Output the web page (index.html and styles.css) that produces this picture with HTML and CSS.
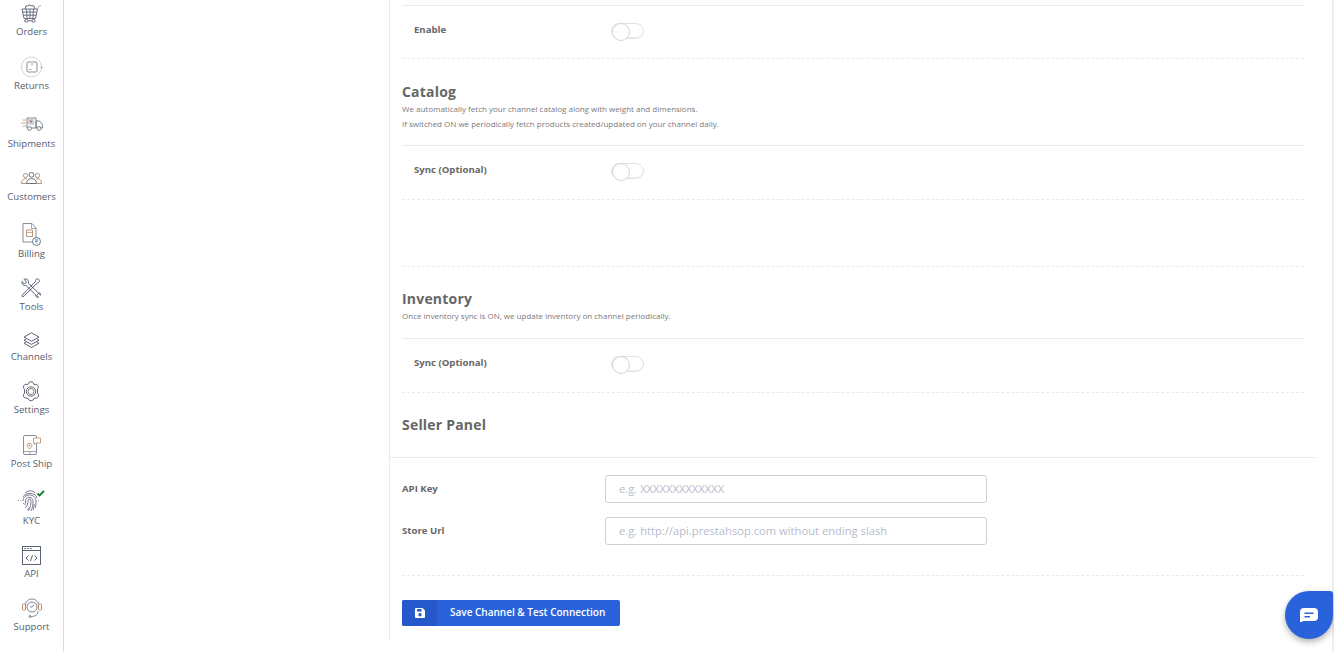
FILE: index.html
```html
<!DOCTYPE html>
<html lang="en">
<head>
<meta charset="utf-8">
<title>Channel settings</title>
<link rel="stylesheet" href="styles.css">
</head>
<body>
<div class="app">
  <nav class="sidebar">
    <a class="nav-item nav-orders">
      <svg class="ico" width="21" height="19" viewBox="0 0 21 19"><g fill="none" stroke="#4a5268" stroke-width=".8"><path d="M1 5h15.500l-2 9.500H3z"/><path d="M1.800 8h14M2.400 11.200h12.800M5.500 5l.6 9.500M9 5v9.500M12.500 5l-.6 9.500"/><circle cx="5.500" cy="16.800" r="1.500"/><circle cx="12.500" cy="16.800" r="1.500"/><path d="M3 16.800h1M7 16.800h4"/><path d="M4 5l1-3h2l1-1.200 2 1 3 0 1 3"/></g><path d="M16.500 5l1-2.500 2.500-1" stroke="#b98d6a" stroke-width=".8" fill="none"/></svg>
      <span class="nav-label">Orders</span>
    </a>
    <a class="nav-item nav-returns">
      <svg class="ico" width="22" height="22" viewBox="0 0 22 22"><circle cx="10.500" cy="11" r="10" fill="none" stroke="#d9d3cc"/><rect x="6" y="6" width="10" height="10" rx="1" fill="none" stroke="#7b8296" stroke-width=".9"/><path d="M9.500 6h3v3.500h-3z" fill="#d9dbe2"/><path d="M8.500 13.500h2" stroke="#7b8296" stroke-width=".8"/><path d="M20 11l1.500 1" stroke="#6d758a"/></svg>
      <span class="nav-label">Returns</span>
    </a>
    <a class="nav-item nav-shipments">
      <svg class="ico" width="22" height="14" viewBox="0 0 22 14"><g fill="none" stroke="#5a6278" stroke-width=".8"><path d="M6 1h9v10H6zM15 4h3.500l3 3.500V11H15z"/></g><rect x="7" y="1.500" width="6" height="6" fill="#c9ccd4"/><path d="M9 4.500h2M10 3v3" stroke="#b5664a" stroke-width=".7"/><g fill="#fff" stroke="#5a6278" stroke-width=".8"><circle cx="8.500" cy="11.500" r="1.900"/><circle cx="18" cy="11.500" r="1.900"/></g><path d="M1.500 3H5M0 6h5M1.500 9H5" stroke="#c9965f" stroke-width=".8" fill="none"/></svg>
      <span class="nav-label">Shipments</span>
    </a>
    <a class="nav-item nav-customers">
      <svg class="ico" width="21" height="12" viewBox="0 0 21 12"><g fill="none" stroke="#4a5268" stroke-width=".8"><circle cx="10.500" cy="2.800" r="2.400"/><path d="M5.500 11.500c0-6.500 10-6.500 10 0z"/></g><g fill="none" stroke="#a2785c" stroke-width=".8"><circle cx="4.500" cy="3.500" r="2.100"/><circle cx="16.500" cy="3.500" r="2.100"/><path d="M5.500 11.500H.5c0-4 3-5.500 5.500-4.500M15.500 11.500h5c0-4-3-5.500-5.500-4.500"/></g></svg>
      <span class="nav-label">Customers</span>
    </a>
    <a class="nav-item nav-billing">
      <svg class="ico" width="19" height="23" viewBox="0 0 19 23"><path d="M1 .5h9l4 4.500v14H1z" fill="none" stroke="#7b8296" stroke-width=".9"/><path d="M9.500.5v5H14" fill="none" stroke="#7b8296" stroke-width=".7"/><path d="M4.500 7h6v6.500h-6z" fill="none" stroke="#b98d6a" stroke-width=".9"/><path d="M4.500 9.500h6" stroke="#b98d6a" stroke-width=".7"/><circle cx="14.500" cy="18.500" r="4" fill="#fff" stroke="#5a6278" stroke-width=".9"/><path d="M13 16.800h3M13 18.300h3M13.800 16.800c2 0 1.700 1.800-.3 1.800l2 2.200" stroke="#3b6fc4" stroke-width=".6" fill="none"/></svg>
      <span class="nav-label">Billing</span>
    </a>
    <a class="nav-item nav-tools">
      <svg class="ico" width="20" height="20" viewBox="0 0 20 20"><g fill="none" stroke="#4a5268" stroke-width=".9"><path d="M1 3.500l2.500 2.500 2-2L3 1.300C5 .3 7.500 1.500 7.500 4l-.3 1 10 9.800c1.200-.4 2.500.4 2.300 2.400l-2-1.700-1.800 1.800 1.900 2c-2 .3-3-.8-2.800-2.300L4.800 7.400C2.500 8 .5 6 1 3.500z"/><path d="M15.500 1c1-1 3.500.8 2.800 2.800-.3.8-1.300 1-2 1.200L3.500 17.500 1.800 19 .8 18l1.400-2L14.500 3.500c0-.8.300-1.800 1-2.500z"/></g></svg>
      <span class="nav-label">Tools</span>
    </a>
    <a class="nav-item nav-channels">
      <svg class="ico" width="17" height="16" viewBox="0 0 17 16"><g fill="none" stroke="#4a5268" stroke-width=".9"><path d="M8.500 .8l7.500 4.200-7.500 4.200L1 5z"/><path d="M3 7L1 8.200l7.500 4.200L16 8.200 14 7"/><path d="M3 10.300l-2 1 7.500 4.200 7.500-4.200-2-1"/></g></svg>
      <span class="nav-label">Channels</span>
    </a>
    <a class="nav-item nav-settings">
      <svg class="ico" width="20" height="21" viewBox="0 0 20 21"><g fill="none" stroke="#4a5268" stroke-width=".9"><path d="M8 1.500c1-1 3-1 4 0l1 2 2.200-.2c1.500.3 2.500 2 2 3.500L16.500 8.500v3.500l1 1.700c.5 1.500-.5 3.200-2 3.500l-2.200-.2-1.300 2c-1 1-3 1-4 0l-1.300-2-2.200.2c-1.500-.3-2.500-2-2-3.500l1-1.700V8.500l-1-1.700c-.5-1.500.5-3.200 2-3.500L6.700 3.500z"/><circle cx="10" cy="10.500" r="4.700"/></g><circle cx="10" cy="10.500" r="3" fill="none" stroke="#8a6f5d" stroke-width=".9"/></svg>
      <span class="nav-label">Settings</span>
    </a>
    <a class="nav-item nav-postship">
      <svg class="ico" width="18" height="20" viewBox="0 0 18 20"><rect x=".5" y=".5" width="13" height="19" rx="1.500" fill="none" stroke="#7b8296" stroke-width=".9"/><path d="M1 16.500h12M6 18h2" stroke="#7b8296" stroke-width=".7"/><path d="M6.500 14c-2-2-3-3.300-2.300-4.700.7-1.300 3.900-1.300 4.600 0 .7 1.400-.3 2.700-2.300 4.700z" fill="none" stroke="#b98d6a" stroke-width=".9"/><circle cx="6.500" cy="10.500" r=".9" fill="#b98d6a"/><path d="M10.500 3h7v5h-4.500l-1.500 1.500V8h-1z" fill="#fff" stroke="#b98d6a" stroke-width=".8"/></svg>
      <span class="nav-label">Post Ship</span>
    </a>
    <a class="nav-item nav-kyc">
      <svg class="ico" width="27" height="22" viewBox="0 0 27 22"><g fill="none" stroke="#4a5268" stroke-width=".75"><path d="M7 3c3-3 8-3 10 0"/><path d="M5 7c2-5 13-5 14 1"/><path d="M5 11c0-8 13-8 13 0 0 3 0 5-1 7"/><path d="M7 15c1-2 0-4 1-6 1.500-3 7-2 7 2 0 4-.5 7-2 10"/><path d="M7 18c2-1.500 3-4 3-7 0-3 3-2.500 3 0s-.5 6-2.500 10"/><path d="M5 14c.5 0 .5 0 .5-1M9 20c1-.8 1.500-1.500 2-2.500M15 20c1-2.500 1-4 1.300-6"/></g><path d="M0 10.500h4M20 10.500h2" stroke="#7b8296" stroke-width=".8" stroke-dasharray="1 1"/><path d="M19.500 3.500l2 2 4.500-4.500" fill="none" stroke="#17803a" stroke-width="1.900"/></svg>
      <span class="nav-label">KYC</span>
    </a>
    <a class="nav-item nav-api">
      <svg class="ico" width="19" height="19" viewBox="0 0 19 19"><rect x=".5" y=".5" width="18" height="18" fill="none" stroke="#4a5268" stroke-width=".9"/><path d="M.5 4.500h18" stroke="#4a5268" stroke-width=".9"/><path d="M2 2.500h2M5 2.500h2M8 2.500h2" stroke="#7b8296"/><path d="M6.500 9.500L4 12l2.500 2.500M12.500 9.500L15 12l-2.500 2.500M10.500 9l-2 6" fill="none" stroke="#4a5268" stroke-width=".9"/></svg>
      <span class="nav-label">API</span>
    </a>
    <a class="nav-item nav-support">
      <svg class="ico" width="20" height="20" viewBox="0 0 20 20"><g fill="none" stroke="#6d758a" stroke-width=".9"><path d="M3.500 7C4 -1 16 -1 16.500 7"/><circle cx="10" cy="9" r="5"/><path d="M10 9l2-2M10 9H8"/><path d="M16 13c0 4.500-3.500 5.500-7 5.500"/><circle cx="8" cy="18.500" r="1"/></g><rect x=".5" y="6" width="3" height="6" rx="1" fill="none" stroke="#b98d6a"/><rect x="16.500" y="6" width="3" height="6" rx="1" fill="none" stroke="#b98d6a"/></svg>
      <span class="nav-label">Support</span>
    </a>
  </nav>

  <main class="panel">
    <section class="block block-first">
      <div class="row"><span class="row-label">Enable</span><span class="toggle"></span></div>
    </section>

    <section class="block">
      <h2 class="title title-catalog">Catalog</h2>
      <p class="desc">We automatically fetch your channel catalog along with weight and dimensions.</p>
      <p class="desc">If switched ON we periodically fetch products created/updated on your channel daily.</p>
      <div class="row row-ruled row-catalog"><span class="row-label">Sync (Optional)</span><span class="toggle"></span></div>
      <div class="spacer"></div>
    </section>

    <section class="block">
      <h2 class="title title-inventory">Inventory</h2>
      <p class="desc">Once inventory sync is ON, we update inventory on channel periodically.</p>
      <div class="row row-ruled row-inventory"><span class="row-label">Sync (Optional)</span><span class="toggle"></span></div>
    </section>

    <section class="block">
      <h2 class="title title-seller">Seller Panel</h2>
    </section>

    <form class="credentials">
      <label class="field"><span class="field-label">API Key</span><input class="field-input" type="text" placeholder="e.g. XXXXXXXXXXXXX"></label>
      <label class="field"><span class="field-label">Store Url</span><input class="field-input" type="text" placeholder="e.g. http://api.prestahsop.com without ending slash"></label>
      <div class="form-rule"></div>
      <button class="save" type="button">
        <span class="save-icon"><svg width="10" height="10" viewBox="0 0 10 10"><path d="M1 0h6.500L10 2.500V9a1 1 0 0 1-1 1H1a1 1 0 0 1-1-1V1a1 1 0 0 1 1-1zm1 1v2.500h4.500V1zM5 5a1.700 1.700 0 1 0 0 3.400A1.700 1.700 0 0 0 5 5z" fill="#fff" fill-rule="evenodd"/></svg></span>
        <span class="save-text">Save Channel &amp; Test Connection</span>
      </button>
    </form>
  </main>
  <div class="rail"></div>
</div>
<button class="chat" type="button" aria-label="Chat">
  <svg width="18" height="14" viewBox="0 0 18 14"><path d="M4 0h10a4 4 0 0 1 4 4v5a4 4 0 0 1-4 4H3a3 3 0 0 1-3 1V4a4 4 0 0 1 4-4zm.5 4.500v1.600h9V4.500zm0 3.400v1.600h5.500V7.900z" fill="#fff" fill-rule="evenodd"/></svg>
</button>
</body>
</html>
```
FILE: styles.css
```css
* { box-sizing: border-box; }
html, body { margin: 0; height: 100%; overflow: hidden; background: #fff; }
body { font-family: "Open Sans", sans-serif; color: #666; }

.app { display: flex; height: 652px; }

.sidebar {
  width: 64px;
  flex: none;
  border-right: 1px solid #dcdcdc;
  display: flex;
  flex-direction: column;
  align-items: center;
}
.nav-item { display: flex; flex-direction: column; align-items: center; justify-content: flex-end; }
.nav-label { font-size: 9.600px; line-height: 16px; color: #565d70; height: 14px; white-space: nowrap; }
.ico { display: block; flex: none; }

.nav-orders { height: 38px; }
.nav-returns { height: 54px; }
.nav-shipments { height: 58px; }
.nav-customers { height: 53px; }
.nav-billing { height: 57px; }
.nav-tools { height: 53px; }
.nav-channels { height: 50px; }
.nav-settings { height: 53px; }
.nav-postship { height: 54px; }
.nav-kyc { height: 57px; }
.nav-api { height: 53px; }
.nav-support { height: 53px; }

.nav-orders .ico { margin-bottom: 1px; }
.nav-returns .ico { margin-bottom: 0; }
.nav-shipments .ico { margin-bottom: 5px; }
.nav-customers .ico { margin-bottom: 5px; }
.nav-billing .ico { margin-bottom: 0; }
.nav-tools .ico { margin-bottom: 1px; }
.nav-channels .ico { margin-bottom: 1px; }
.nav-settings .ico { margin-bottom: 0; }
.nav-postship .ico { margin-bottom: 1px; }
.nav-kyc .ico { margin-bottom: 1px; }
.nav-api .ico { margin-bottom: 1px; }
.nav-support .ico { margin-bottom: 1px; }

.panel {
  margin-left: 325px;
  width: 927px;
  height: 640px;
  padding-top: 5px;
  border-left: 1px solid #ececec;
  flex: none;
}
.rail { margin-left: auto; width: 2px; background: #eeeeee; flex: none; }

.block { margin: 0 12px; }
.block-first { border-top: 1px solid #ececec; }

.row {
  height: 53px;
  display: flex;
  align-items: flex-start;
  padding: 16px 0 0 12px;
  border-bottom: 1px dashed #e9e9e9;
}
.row-ruled { border-top: 1px solid #ececec; height: 55px; }
.row-catalog { margin-top: 14px; }
.row-inventory { margin-top: 15px; }
.row-label { width: 197px; font-size: 9.600px; line-height: 16px; font-weight: 700; color: #666; }

.toggle {
  width: 33px;
  height: 16px;
  margin-top: 1px;
  border: 1px solid #e2e2e2;
  border-radius: 9px;
  position: relative;
  display: block;
  box-shadow: inset 0 -1px 1px #ececec;
}
.toggle::before {
  content: "";
  position: absolute;
  left: 0;
  top: -1px;
  width: 16px;
  height: 16px;
  border-radius: 50%;
  background: #fff;
  border: 1px solid #d4d4d4;
}

.title { margin: 0 0 -1px; font-size: 14px; line-height: 20px; font-weight: 700; color: #666; letter-spacing: .2px; }
.title-catalog { padding-top: 23px; }
.title-inventory { padding-top: 22px; border-top: 1px dashed #e9e9e9; }
.title-seller { margin: 0; padding-top: 22px; padding-bottom: 22px; }
.desc { margin: 0; font-size: 8px; line-height: 15px; color: #7a7a7a; }

.spacer { height: 66px; }

.credentials { border-top: 1px solid #ececec; padding: 17px 12px 0; }
.field { display: flex; align-items: center; height: 28px; margin-bottom: 14px; }
.field-label { width: 203px; padding-bottom: 1px; font-size: 9.600px; font-weight: 700; color: #666; }
.field-input {
  width: 382px;
  height: 28px;
  padding: 0 13px 1px;
  border: 1px solid #ccd0d6;
  border-radius: 3px;
  font: 11.200px "Open Sans", sans-serif;
  background: #fff;
}
.field-input::placeholder { color: #b8bccb; opacity: 1; }

.form-rule { margin-top: 30px; border-top: 1px dashed #e9e9e9; }

.save {
  display: flex;
  align-items: stretch;
  width: 218px;
  height: 26px;
  margin-top: 24px;
  padding: 0;
  border: 0;
  border-radius: 2px;
  overflow: hidden;
  background: #2a62dc;
  color: #fff;
  font-family: "Open Sans", sans-serif;
}
.save-icon { width: 35px; background: #2558cb; display: flex; align-items: center; justify-content: center; }
.save-text { flex: 1; font-size: 10px; font-weight: 600; line-height: 25px; text-align: left; padding-left: 13px; white-space: nowrap; }

.chat {
  position: absolute;
  left: 1285px;
  top: 591px;
  width: 48px;
  height: 48px;
  padding: 0;
  border: 0;
  border-radius: 50% 3px 50% 50%;
  background: #2a62dc;
  box-shadow: 0 3px 6px rgba(0,0,0,.3);
  display: flex;
  align-items: center;
  justify-content: center;
}
```
